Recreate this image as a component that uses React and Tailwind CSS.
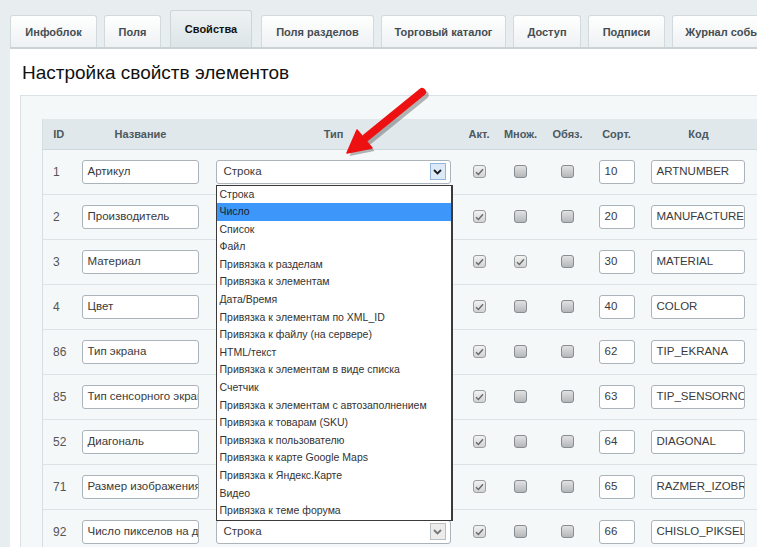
import React from 'react';

const TABS = [
  { label: 'Инфоблок', w: 'w-[87px]' },
  { label: 'Поля', w: 'w-[57px]' },
  { label: 'Свойства', w: 'w-[82px]', active: true },
  { label: 'Поля разделов', w: 'w-[113px]' },
  { label: 'Торговый каталог', w: 'w-[125px]' },
  { label: 'Доступ', w: 'w-[68px]' },
  { label: 'Подписи', w: 'w-[77px]' },
  { label: 'Журнал событий', w: 'w-[120px]' },
];

const ROWS = [
  { id: 1, name: 'Артикул', multi: false, sort: 10, code: 'ARTNUMBER' },
  { id: 2, name: 'Производитель', multi: false, sort: 20, code: 'MANUFACTURER' },
  { id: 3, name: 'Материал', multi: true, sort: 30, code: 'MATERIAL' },
  { id: 4, name: 'Цвет', multi: false, sort: 40, code: 'COLOR' },
  { id: 86, name: 'Тип экрана', multi: false, sort: 62, code: 'TIP_EKRANA' },
  { id: 85, name: 'Тип сенсорного экрана', multi: false, sort: 63, code: 'TIP_SENSORNOGO' },
  { id: 52, name: 'Диагональ', multi: false, sort: 64, code: 'DIAGONAL' },
  { id: 71, name: 'Размер изображения', multi: false, sort: 65, code: 'RAZMER_IZOBRAZHENIYA' },
  { id: 92, name: 'Число пикселов на дюйм', multi: false, sort: 66, code: 'CHISLO_PIKSELOV' },
];

const TYPES = [
  'Строка',
  'Число',
  'Список',
  'Файл',
  'Привязка к разделам',
  'Привязка к элементам',
  'Дата/Время',
  'Привязка к элементам по XML_ID',
  'Привязка к файлу (на сервере)',
  'HTML/текст',
  'Привязка к элементам в виде списка',
  'Счетчик',
  'Привязка к элементам с автозаполнением',
  'Привязка к товарам (SKU)',
  'Привязка к пользователю',
  'Привязка к карте Google Maps',
  'Привязка к Яндекс.Карте',
  'Видео',
  'Привязка к теме форума',
];

function Checkbox({ checked }) {
  return (
    <div
      className={`mx-auto w-[13px] h-[13px] rounded-[3px] border flex items-center justify-center ${
        checked
          ? 'border-[#9a9fa3] bg-gradient-to-b from-[#f2f2f2] to-[#d3d3d3]'
          : 'border-[#878c90] bg-gradient-to-b from-[#e2e2e2] to-[#b4b7b9]'
      }`}
    >
      {checked && (
        <svg width="9" height="8" viewBox="0 0 9 8">
          <path d="M1 4.2 L3.4 6.4 L8 1.2" fill="none" stroke="#66696c" strokeWidth="1.4" />
        </svg>
      )}
    </div>
  );
}

function TextInput({ value, className }) {
  return (
    <div
      className={`h-[24px] rounded-[3px] border border-[#aab4ba] bg-white px-[5px] flex items-center text-[11.5px] text-[#3a3a3a] overflow-hidden whitespace-nowrap ${className}`}
    >
      {value}
    </div>
  );
}

function TypeSelect({ open }) {
  return (
    <div className="relative w-[235px] ml-[9px]">
      <div className="h-[24px] rounded-[3px] border border-[#aab4ba] bg-white pl-[7px] pr-[4px] flex items-center justify-between text-[11.5px] text-[#3a3a3a]">
        <span>Строка</span>
        <div
          className={`w-[16px] h-[17px] border flex items-center justify-center ${
            open ? 'border-[#93b6da] bg-[#dce9f7]' : 'border-[#b9bfc3] bg-[#ececec]'
          }`}
        >
          <svg width="9" height="6" viewBox="0 0 9 6">
            <path
              d="M1 1 L4.5 4.5 L8 1"
              fill="none"
              stroke={open ? '#1d1d1d' : '#777'}
              strokeWidth="1.8"
            />
          </svg>
        </div>
      </div>
      {open && (
        <div className="absolute left-0 top-[25px] z-10 w-[237px] bg-white border border-[#3a3a3a] border-r-2 text-[10.5px] text-[#333]">
          {TYPES.map((t, i) => (
            <div
              key={t}
              className={`h-[17.6px] leading-[17.6px] px-[3px] whitespace-nowrap ${
                i === 1 ? 'bg-[#3d97fa] text-[#17222e]' : ''
              }`}
            >
              {t}
            </div>
          ))}
        </div>
      )}
    </div>
  );
}

export default function App() {
  return (
    <div
      className="relative w-[757px] h-[547px] overflow-hidden bg-[#e8eef0]"
      style={{ fontFamily: '"Liberation Sans", Arial, sans-serif' }}
    >
      {/* Tabs */}
      <div className="flex items-end gap-[7px] pl-[10px] pt-[10px] h-[47px]">
        {TABS.map((tab) => (
          <div
            key={tab.label}
            className={`${tab.w} shrink-0 rounded-t-[3px] border border-b-0 flex justify-center text-[11px] font-bold whitespace-nowrap overflow-hidden ${
              tab.active
                ? 'h-[37px] mx-[2px] pt-[10px] border-[#cdd5d9] bg-gradient-to-b from-[#eef2f3] to-[#dde5e8] text-[#111]'
                : 'h-[32px] pt-[8px] border-[#d3dadd] bg-gradient-to-b from-[#ffffff] to-[#eef1f2] text-[#454d52]'
            }`}
          >
            {tab.label}
          </div>
        ))}
      </div>

      {/* Content panel */}
      <div className="ml-[10px] border-t-2 border-[#cbd2d6] bg-white h-[600px]">
        <h1 className="pl-[12px] pt-[13px] pb-[11px] text-[19px] leading-[22px] text-[#111]">
          Настройка свойств элементов
        </h1>

        <div className="ml-[10px] border border-[#dbe2e5] bg-[#f5f8f9] pl-[21px] pt-[23px] w-[900px]">
          <table className="table-fixed border-collapse border-l border-[#d6dee1] text-[12px] text-[#444]">
            <thead>
              <tr className="h-[30px] bg-[#e1e8eb] border-b border-[#cfd8dc] text-[11px] font-bold text-[#4b5960]">
                <th className="w-[32px] font-bold text-center">ID</th>
                <th className="w-[132px] font-bold text-center">Название</th>
                <th className="w-[254px] font-bold text-center">Тип</th>
                <th className="w-[37px] font-bold text-center">Акт.</th>
                <th className="w-[46px] font-bold text-center">Множ.</th>
                <th className="w-[48px] font-bold text-center">Обяз.</th>
                <th className="w-[50px] font-bold text-center">Сорт.</th>
                <th className="w-[114px] font-bold text-center">Код</th>
                <th className="w-[120px]"></th>
              </tr>
            </thead>
            <tbody>
              {ROWS.map((row, i) => (
                <tr key={row.id} className="h-[45px] border-b border-[#dce3e6] bg-[#f5f8f9]">
                  <td className="pl-[10px] text-[#555]">{row.id}</td>
                  <td>
                    <TextInput value={row.name} className="w-[117px] ml-[7px]" />
                  </td>
                  <td>
                    <TypeSelect open={i === 0} />
                  </td>
                  <td>
                    <Checkbox checked />
                  </td>
                  <td>
                    <Checkbox checked={row.multi} />
                  </td>
                  <td>
                    <Checkbox checked={false} />
                  </td>
                  <td>
                    <TextInput value={row.sort} className="w-[36px] ml-[7px]" />
                  </td>
                  <td>
                    <TextInput value={row.code} className="w-[94px] ml-[9px]" />
                  </td>
                  <td></td>
                </tr>
              ))}
            </tbody>
          </table>
        </div>
      </div>

      {/* Red annotation arrow */}
      <svg
        className="absolute left-[330px] top-[80px] z-20"
        width="110"
        height="90"
        viewBox="0 0 110 90"
      >
        <g opacity="0.35" transform="translate(2.5 3)">
          <line x1="92" y1="12" x2="36" y2="57.5" stroke="#333" strokeWidth="8.5" strokeLinecap="round" />
          <polygon points="17,73 27,50 42,68" fill="#333" />
        </g>
        <line x1="92" y1="12" x2="36" y2="57.5" stroke="#ee1111" strokeWidth="8" strokeLinecap="round" />
        <polygon points="17,73 27,50 42,68" fill="#ee1111" stroke="#ee1111" strokeLinejoin="round" strokeWidth="1.5" />
      </svg>
    </div>
  );
}
